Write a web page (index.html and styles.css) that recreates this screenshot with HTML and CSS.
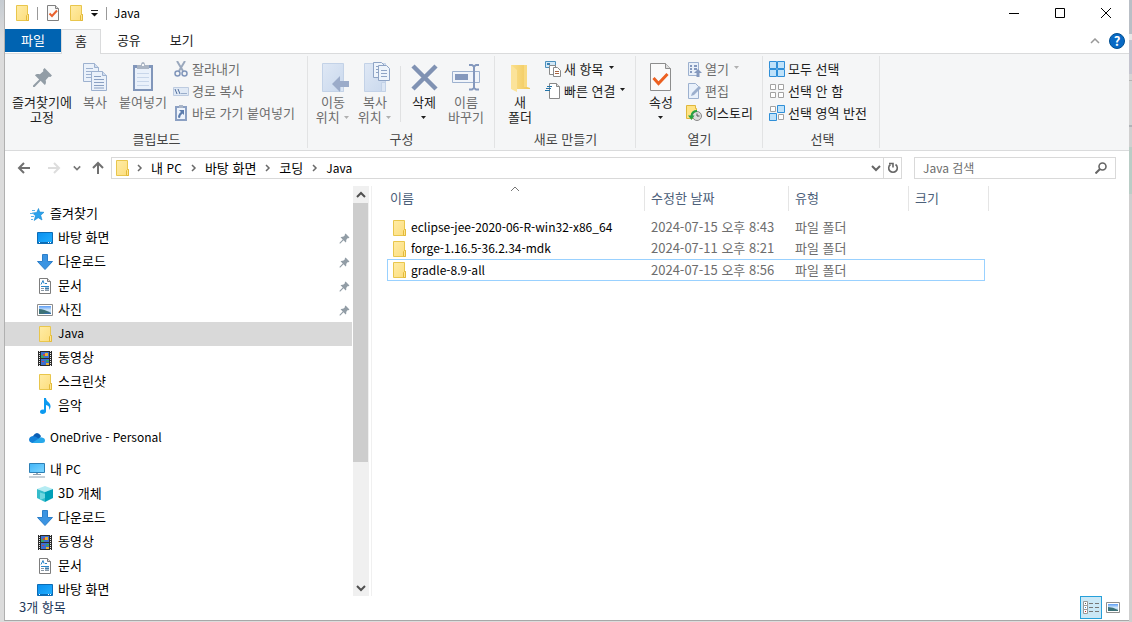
FILE: index.html
```html
<!DOCTYPE html>
<html lang="ko">
<head>
<meta charset="utf-8">
<title>Java</title>
<link rel="stylesheet" href="styles.css">
</head>
<body>
<svg class="defs" aria-hidden="true">
  <defs>
    <linearGradient id="gFolder" x1="0" y1="0" x2="1" y2="1"><stop offset="0" stop-color="#ffeca6"/><stop offset="1" stop-color="#fcdd7c"/></linearGradient>
    <linearGradient id="gBig" x1="0" y1="0" x2="1" y2="0"><stop offset="0" stop-color="#fbe08c"/><stop offset="1" stop-color="#f0c75a"/></linearGradient>
    <linearGradient id="gDesk" x1="0" y1="0" x2="1" y2="1"><stop offset="0" stop-color="#0a8fef"/><stop offset="1" stop-color="#22b0ff"/></linearGradient>
    <linearGradient id="gPc" x1="0" y1="0" x2="1" y2="1"><stop offset="0" stop-color="#3fb4f8"/><stop offset="1" stop-color="#7fd6ff"/></linearGradient>
    <linearGradient id="gPhoto" x1="0" y1="0" x2="0" y2="1"><stop offset="0" stop-color="#5c9df5"/><stop offset=".5" stop-color="#cfe6fa"/><stop offset="1" stop-color="#a9cdea"/></linearGradient>
    <linearGradient id="gMove" x1="0" y1="0" x2="1" y2="1"><stop offset="0" stop-color="#dfe8f5"/><stop offset="1" stop-color="#c9d8ed"/></linearGradient>
  </defs>
  <symbol id="folder" viewBox="0 0 16 16"><path d="M2.500.5h11v9h1v6h-12z" fill="url(#gFolder)" stroke="#e9c64c"/><path d="M12.500 15.500v-5l1-1h1v6z" fill="#ffe68f" stroke="#e3b93a"/></symbol>
  <symbol id="check" viewBox="0 0 16 16"><path d="M2.500.5h8l3 3v12h-11z" fill="#fafafa" stroke="#808080"/><path d="M10.500.5v3h3" fill="#ddd" stroke="#808080"/><path d="M4.500 8.500l2.500 2.500 5-5.500" fill="none" stroke="#e8602c" stroke-width="2"/></symbol>
  <symbol id="pin" viewBox="0 0 20 20"><path d="M12 1l7 7-1.500 1.500-1.500-.3-3 3.300c.7 2 .2 3.700-.8 4.700l-4-4L2.500 19H1v-1.500l5.800-5.700-4-4c1-1 2.700-1.500 4.700-.8l3.300-3-.3-1.500z" fill="#929da6"/></symbol>
  <symbol id="copy" viewBox="0 0 32 32"><g fill="#eaf1fa" stroke="#9db1cf"><path d="M4.500 1.500h11l4 4v14h-15z"/><path d="M15.500 1.500v4h4" fill="#cfdcee"/><path d="M7 6.500h7M7 9.500h10M7 12.500h10M7 15.500h10"/><path d="M12.500 9.500h11l4 4v15h-15z"/><path d="M23.500 9.500v4h4" fill="#cfdcee"/><path d="M15 14.500h7M15 17.500h10M15 20.500h10M15 23.500h10M15 26h10" stroke="#8aa0c2"/></g></symbol>
  <symbol id="paste" viewBox="0 0 32 32"><path d="M6 3h20v26H6z" fill="#8196ba"/><path d="M8 6h16v21H8z" fill="#eaf1fb"/><path d="M10 11.500h12M10 15.500h12M10 19.500h12M10 23.500h12" stroke="#c8d6ea"/><path d="M10 3h4c0-4 4-4 4 0h4v4H10z" fill="#aab4c3"/><path d="M15 2h2v2h-2z" fill="#f5f6f7"/></symbol>
  <symbol id="scissors" viewBox="0 0 16 16"><path d="M4 0l6 10M12 0L6 10" stroke="#9aa8bd" stroke-width="2" fill="none"/><circle cx="4.500" cy="12.500" r="2.500" fill="none" stroke="#8196ba" stroke-width="1.500"/><circle cx="11.500" cy="12.500" r="2.500" fill="none" stroke="#8196ba" stroke-width="1.500"/></symbol>
  <symbol id="path" viewBox="0 0 16 16"><path d="M.5 4.500h15v8H.5z" fill="#e0e9f5" stroke="#bdcbe0"/><path d="M2 6l2 5M5 6l2 5M8.500 10.500h1M10.500 10.500h1M12.500 10.500h1" stroke="#52709e" fill="none"/></symbol>
  <symbol id="shortcut" viewBox="0 0 16 16"><path d="M2 1h12v15H2z" fill="#8ba0c3"/><path d="M4 3h8v11H4z" fill="#eef4fc"/><path d="M6 0h4v3H6z" fill="#a9b5c8"/><path d="M6 5h5v5L9.500 8.500Q7 10 7 13L5 12.500Q5 9 8 7z" fill="#5d7dad"/></symbol>
  <symbol id="move" viewBox="0 0 32 32"><path d="M5.500 1.500h21v28h-21z" fill="url(#gMove)" stroke="#c3d2e7"/><path d="M23.500 20.500h3v9h-3z" fill="#dce6f4" stroke="#c3d2e7"/><path d="M15 22l8-8v5h9v6h-9v5z" fill="#9babc9"/></symbol>
  <symbol id="copyto" viewBox="0 0 32 32"><path d="M5.500 1.500h21v28h-21z" fill="url(#gMove)" stroke="#c3d2e7"/><path d="M22.500 20.500h4v9h-4z" fill="#dce6f4" stroke="#c3d2e7"/><g fill="#eef4fb" stroke="#8fa4c5"><path d="M14.500.5h8l3 3v12h-11z"/><path d="M17 4.500h5M17 7.500h5M17 10.500h5"/><path d="M19.500 3.500h8l3 3v12h-11z"/><path d="M22 8.500h6M22 11.500h6M22 14.500h6"/></g></symbol>
  <symbol id="delete" viewBox="0 0 32 32"><path d="M5 4l23 23M28 4L5 27" stroke="#8092b3" stroke-width="4.500"/></symbol>
  <symbol id="rename" viewBox="0 0 32 32"><path d="M2.500 9.500h27v11h-27z" fill="#f0f4fa" stroke="#9db1cf"/><path d="M5 12h13v6H5z" fill="#8498bd"/><path d="M19 3h3l2 1.500L26 3h3M19 27.500h3l2-1.500 2 1.500h3M24 4v23" fill="none" stroke="#8498bd" stroke-width="2"/></symbol>
  <symbol id="newfolder" viewBox="0 0 32 32"><path d="M7 3h16v22l3 1v1H11z" fill="url(#gBig)"/><path d="M7 3l6 5v22l-6-3z" fill="#fbe39a"/><path d="M20 3h3v22h-3z" fill="#f8da82"/></symbol>
  <symbol id="newitem" viewBox="0 0 16 16"><path d="M.5.500h10v6H.5z" fill="#d2e8f7" stroke="#4b90bd"/><path d="M2 2h3v2H2z" fill="#3a82b4"/><g fill="#fff" stroke="#8a8a8a"><path d="M4.500 4.500h6v9h-6z"/><path d="M8.500 6.500h4l3 3v6h-7z"/></g><path d="M10 10.500h4M10 12.500h4" stroke="#a9643f"/></symbol>
  <symbol id="easy" viewBox="0 0 16 16"><path d="M4.500.5h7l3 3v12h-10z" fill="#fff" stroke="#888"/><path d="M11.500.5v3h3" fill="#ddd" stroke="#888"/><path d="M2 3.500h5M1 5.500h5M0 7.500h5" stroke="#2474a8"/></symbol>
  <symbol id="props" viewBox="0 0 32 32"><path d="M5.500 1.500h15l5 5v22h-20z" fill="#fafafa" stroke="#8d8d8d"/><path d="M20.500 1.500v5h5" fill="#dedede" stroke="#8d8d8d"/><path d="M8.500 16l5 5.500L22.500 12" fill="none" stroke="#ec6021" stroke-width="3"/></symbol>
  <symbol id="open" viewBox="0 0 16 16"><path d="M2.500 1.500h10v13h-10z" fill="#e9f0f9" stroke="#9db1cf"/><path d="M4 4h2v2H4zM4 7h2v2H4zM4 10h2v2H4zM8 4h3v2H8zM8 7h3v2H8z" fill="#8498bd"/><path d="M8 12l4-4 4 4h-2.500v4h-3v-4z" fill="#8498bd"/></symbol>
  <symbol id="edit" viewBox="0 0 16 16"><path d="M2.500.5h7l3 3v12h-10z" fill="#e9f1fb" stroke="#9db1cf"/><path d="M5 13l1-3 7-7 2 2-7 7z" fill="#9cafcd"/></symbol>
  <symbol id="history" viewBox="0 0 16 16"><path d="M.5.500h9v3h1v10H.5z" fill="#ffe384" stroke="#dfb73c"/><circle cx="11" cy="11" r="4.500" fill="#ddd" stroke="#888"/><path d="M11 8.500v2.500h2.500" fill="none" stroke="#555"/><path d="M11 6Q6 6 5.500 11" fill="none" stroke="#27a243" stroke-width="2"/><path d="M2 10.500l3.500 4.500 3-4.500z" fill="#27a243"/></symbol>
  <symbol id="selall" viewBox="0 0 16 16"><path d="M.5.500h7v7h-7zM8.500.5h7v7h-7zM.5 8.500h7v7h-7zM8.500 8.500h7v7h-7z" fill="#bfe2fa" stroke="#2f8fd8"/></symbol>
  <symbol id="selnone" viewBox="0 0 16 16"><path d="M1.500 1.500h5v5h-5zM9.500 1.500h5v5h-5zM1.500 9.500h5v5h-5zM9.500 9.500h5v5h-5z" fill="#fff" stroke="#a2a2a2"/></symbol>
  <symbol id="selinv" viewBox="0 0 16 16"><path d="M1.500 1.500h5v5h-5zM9.500 9.500h5v5h-5z" fill="#fff" stroke="#a2a2a2"/><path d="M8.500.5h7v7h-7zM.5 8.500h7v7h-7z" fill="#bfe2fa" stroke="#2f8fd8"/></symbol>
  <symbol id="star" viewBox="0 0 16 16"><path d="M9.500 2.500l1.200 3.500 4.300.300-3.300 2.900 1.300 4.800-3.800-2.300-4 2.800 1.300-4.800L3.500 7l4.200-.5z" fill="#2ba2ec" stroke="#1686cf" stroke-width=".6"/><path d="M3 4.500h3M1 7.500h4M2 10.500h3M2 13.500h2" stroke="#5bb4ec"/></symbol>
  <symbol id="desktop" viewBox="0 0 16 16"><path d="M.5 2.500h15v11H.5z" fill="url(#gDesk)" stroke="#0c6cb5"/><path d="M1 12.500h14" stroke="#0c6cb5"/><path d="M2 12.500h1M11 12.500h1M13 12.500h1" stroke="#fff"/></symbol>
  <symbol id="down" viewBox="0 0 16 16"><path d="M5.500.5h5v7h5L8 15.500.5 7.500h5z" fill="#3b94e2" stroke="#2c7fca"/></symbol>
  <symbol id="doc" viewBox="0 0 16 16"><path d="M2.500.5h8l3 3v12h-11z" fill="#fff" stroke="#7d7d7d"/><path d="M10.500.5v3h3" fill="#ddd" stroke="#7d7d7d"/><path d="M4 6.500l2-4 1 3M8 5.500h2M4 8.500h8" stroke="#2a86c8" fill="none"/><path d="M4 10.500h3M4 12.500h3M8 12.500h4" stroke="#8a98a5"/><path d="M8 9.500h4v2H8z" fill="#437faa"/></symbol>
  <symbol id="photo" viewBox="0 0 16 16"><path d="M.5 2.500h15v11H.5z" fill="#fff" stroke="#8d8d8d"/><path d="M2 4h12v8H2z" fill="url(#gPhoto)"/><path d="M2 7q5 0 12 4v1H2z" fill="#3c7177"/><path d="M6 12q3-2 8-1v1z" fill="#376fa8"/></symbol>
  <symbol id="film" viewBox="0 0 16 16"><path d="M1 1h14v15H1z" fill="#2b2b2b"/><path d="M2.500 1v15M13.500 1v15" stroke="#eee" stroke-dasharray="1 1"/><path d="M4 2h8v6H4zM4 9h8v6H4z" fill="#3d6fd0"/><path d="M4 5h3v3H4zM9 10h3v2H9z" fill="#37a36b"/><path d="M8 3h3v3H8zM9 13h3v2H9z" fill="#e6b032"/><path d="M6 4h2v2H6zM5 11h2v1H5z" fill="#c5464b"/></symbol>
  <symbol id="music" viewBox="0 0 16 16"><path d="M7 0h2c0 4 5 4 4.500 9-.3 1.500-1 2.500-1.500 3 .8-3-.5-4.500-3-5v6.500c0 3-6 3.200-6 .5 0-2 2-2.800 4-2.300z" fill="#0c9af0"/></symbol>
  <symbol id="cloud" viewBox="0 0 16 16"><path d="M4 6q4-6 8 0l-2 4H3z" fill="#0a5eb5"/><path d="M3 13q-3-1-3-3 0-3.500 4-4 3 0 6 3l3 4z" fill="#1380d8"/><path d="M3 13l6-4q2-2.500 4-1.500 3 .5 3 3 0 2.500-3 2.500z" fill="#28a8ea"/></symbol>
  <symbol id="pc" viewBox="0 0 16 16"><path d="M.5 1.500h15v9H.5z" fill="url(#gPc)" stroke="#2d7fb5"/><path d="M7 11h2v2H7z" fill="#9aa8b3"/><path d="M4 12.500h8M0 15h16" stroke="#8fa1b0"/></symbol>
  <symbol id="cube" viewBox="0 0 16 16"><path d="M0 3l8-3 8 3-8 3z" fill="#b5ecf3"/><path d="M0 3l8 3v10l-8-4z" fill="#35bccb"/><path d="M16 3L8 6v10l8-4z" fill="#00a0b8"/><path d="M3 6.500l5 1.500v4l-5 2z" fill="#70d7e0"/></symbol>
  <symbol id="chev" viewBox="0 0 9 8"><path d="M3 1l3 3-3 3" fill="none" stroke="#6a6a6a" stroke-width="1.500"/></symbol>
  <symbol id="vee" viewBox="0 0 10 10"><path d="M1 3l4 4 4-4" fill="none" stroke="currentColor" stroke-width="2"/></symbol>
  <symbol id="caret" viewBox="0 0 7 4"><path d="M1 0h5L3.500 3z" fill="currentColor"/></symbol>
</svg>

<div class="window">
  <header class="titlebar">
    <svg class="i16"><use href="#folder"/></svg><span class="rule"></span>
    <button class="plain" aria-label="속성"><svg class="i16"><use href="#check"/></svg></button>
    <button class="plain" aria-label="새 폴더"><svg class="i16"><use href="#folder"/></svg></button>
    <button class="plain" aria-label="빠른 실행 도구 모음 사용자 지정"><svg class="custom" viewBox="0 0 8 8"><path d="M0 1.500h7" stroke="#222"/><path d="M0 4h7L3.500 7.500z" fill="#111"/></svg></button>
    <span class="rule"></span>
    <h1 class="en">Java</h1>
    <div class="caption">
      <button aria-label="최소화"><svg viewBox="0 0 10 10"><path d="M0 5.500h10" stroke="#000"/></svg></button>
      <button aria-label="최대화"><svg viewBox="0 0 10 10"><path d="M.5.500h9v9h-9z" fill="none" stroke="#000"/></svg></button>
      <button aria-label="닫기"><svg viewBox="0 0 10 10"><path d="M0 0l10 10M10 0L0 10" stroke="#000"/></svg></button>
    </div>
  </header>

  <nav class="tabs">
    <button class="tab file">파일</button><button class="tab active">홈</button><button class="tab">공유</button><button class="tab">보기</button>
    <button class="plain collapse" aria-label="리본 최소화"><svg viewBox="0 0 10 6"><path d="M1 5l4-4 4 4" fill="none" stroke="#999" stroke-width="1.500"/></svg></button>
    <button class="help" aria-label="도움말">?</button>
  </nav>

  <section class="ribbon">
    <div class="group clip">
      <div class="tools">
        <button class="big wide"><svg class="i32" viewBox="0 0 32 32"><use href="#pin" x="6" y="5" width="21" height="21"/></svg><span>즐겨찾기에<br>고정</span></button>
        <button class="big off"><svg class="i32"><use href="#copy"/></svg><span>복사</span></button>
        <button class="big off paste"><svg class="i32"><use href="#paste"/></svg><span>붙여넣기</span></button>
        <div class="list">
          <button class="small off"><svg class="i16"><use href="#scissors"/></svg>잘라내기</button>
          <button class="small off"><svg class="i16"><use href="#path"/></svg>경로 복사</button>
          <button class="small off"><svg class="i16"><use href="#shortcut"/></svg>바로 가기 붙여넣기</button>
        </div>
      </div>
      <div class="caption-text">클립보드</div>
    </div>
    <div class="group organize">
      <div class="tools">
        <button class="big off"><svg class="i32"><use href="#move"/></svg><span>이동<br>위치 <svg class="caret"><use href="#caret"/></svg></span></button>
        <button class="big off"><svg class="i32"><use href="#copyto"/></svg><span>복사<br>위치 <svg class="caret"><use href="#caret"/></svg></span></button>
        <span class="divider"></span>
        <button class="big"><svg class="i32"><use href="#delete"/></svg><span>삭제<br><svg class="caret"><use href="#caret"/></svg></span></button>
        <button class="big off"><svg class="i32"><use href="#rename"/></svg><span>이름<br>바꾸기</span></button>
      </div>
      <div class="caption-text">구성</div>
    </div>
    <div class="group new">
      <div class="tools">
        <button class="big"><svg class="i32"><use href="#newfolder"/></svg><span>새<br>폴더</span></button>
        <div class="list">
          <button class="small"><svg class="i16"><use href="#newitem"/></svg>새 항목 <svg class="caret"><use href="#caret"/></svg></button>
          <button class="small"><svg class="i16"><use href="#easy"/></svg>빠른 연결 <svg class="caret"><use href="#caret"/></svg></button>
        </div>
      </div>
      <div class="caption-text">새로 만들기</div>
    </div>
    <div class="group open">
      <div class="tools">
        <button class="big"><svg class="i32"><use href="#props"/></svg><span>속성<br><svg class="caret"><use href="#caret"/></svg></span></button>
        <div class="list">
          <button class="small off"><svg class="i16"><use href="#open"/></svg>열기 <svg class="caret"><use href="#caret"/></svg></button>
          <button class="small off"><svg class="i16"><use href="#edit"/></svg>편집</button>
          <button class="small"><svg class="i16"><use href="#history"/></svg>히스토리</button>
        </div>
      </div>
      <div class="caption-text">열기</div>
    </div>
    <div class="group select">
      <div class="tools">
        <div class="list">
          <button class="small"><svg class="i16"><use href="#selall"/></svg>모두 선택</button>
          <button class="small"><svg class="i16"><use href="#selnone"/></svg>선택 안 함</button>
          <button class="small"><svg class="i16"><use href="#selinv"/></svg>선택 영역 반전</button>
        </div>
      </div>
      <div class="caption-text">선택</div>
    </div>
  </section>

  <div class="navbar">
    <button class="plain arrow" aria-label="뒤로"><svg viewBox="0 0 14 14"><path d="M13 7H2M7 2L2 7l5 5" fill="none" stroke="#707070" stroke-width="2"/></svg></button>
    <button class="plain arrow" aria-label="앞으로"><svg viewBox="0 0 14 14"><path d="M1 7h11M7 2l5 5-5 5" fill="none" stroke="#ddd" stroke-width="2"/></svg></button>
    <button class="plain recent" aria-label="최근 위치"><svg class="i8"><use href="#vee"/></svg></button>
    <button class="plain arrow" aria-label="위로"><svg viewBox="0 0 14 14"><path d="M7 13V2M2 7l5-5 5 5" fill="none" stroke="#707070" stroke-width="2"/></svg></button>
    <div class="address">
      <svg class="i16"><use href="#folder"/></svg>
      <svg class="chev"><use href="#chev"/></svg><a href="#">내 <span class="en">PC</span></a>
      <svg class="chev"><use href="#chev"/></svg><a href="#">바탕 화면</a>
      <svg class="chev"><use href="#chev"/></svg><a href="#">코딩</a>
      <svg class="chev"><use href="#chev"/></svg><a href="#" class="en">Java</a>
      <button class="plain history" aria-label="이전 위치"><svg class="i10"><use href="#vee"/></svg></button>
      <button class="plain refresh" aria-label="새로 고침"><svg viewBox="0 0 12 12"><path d="M8.500 2.500a4.300 4.300 0 1 1-5 0" fill="none" stroke="#666" stroke-width="1.600"/><path d="M2 1.500h4v4" fill="none" stroke="#666" stroke-width="1.600"/></svg></button>
    </div>
    <label class="search"><input type="search" placeholder="Java 검색" aria-label="Java 검색"><svg viewBox="0 0 12 12"><circle cx="7.500" cy="4.500" r="3.500" fill="none" stroke="#666" stroke-width="1.600"/><path d="M5 7l-4.500 4.500" stroke="#666" stroke-width="2"/></svg></label>
  </div>

  <main class="content">
    <div class="side">
      <ul class="tree">
        <li class="root"><a href="#"><svg class="i16"><use href="#star"/></svg>즐겨찾기</a></li>
        <li><a href="#"><svg class="i16"><use href="#desktop"/></svg>바탕 화면<svg class="pin"><use href="#pin"/></svg></a></li>
        <li><a href="#"><svg class="i16"><use href="#down"/></svg>다운로드<svg class="pin"><use href="#pin"/></svg></a></li>
        <li><a href="#"><svg class="i16"><use href="#doc"/></svg>문서<svg class="pin"><use href="#pin"/></svg></a></li>
        <li><a href="#"><svg class="i16"><use href="#photo"/></svg>사진<svg class="pin"><use href="#pin"/></svg></a></li>
        <li class="current"><a href="#" class="en"><svg class="i16"><use href="#folder"/></svg>Java</a></li>
        <li><a href="#"><svg class="i16"><use href="#film"/></svg>동영상</a></li>
        <li><a href="#"><svg class="i16"><use href="#folder"/></svg>스크린샷</a></li>
        <li><a href="#"><svg class="i16"><use href="#music"/></svg>음악</a></li>
        <li class="root spaced"><a href="#" class="en"><svg class="i16"><use href="#cloud"/></svg>OneDrive - Personal</a></li>
        <li class="root spaced"><a href="#"><svg class="i16"><use href="#pc"/></svg><span>내 <span class="en">PC</span></span></a></li>
        <li><a href="#"><svg class="i16"><use href="#cube"/></svg>3D 개체</a></li>
        <li><a href="#"><svg class="i16"><use href="#down"/></svg>다운로드</a></li>
        <li><a href="#"><svg class="i16"><use href="#film"/></svg>동영상</a></li>
        <li><a href="#"><svg class="i16"><use href="#doc"/></svg>문서</a></li>
        <li><a href="#"><svg class="i16"><use href="#desktop"/></svg>바탕 화면</a></li>
      </ul>
      <div class="scroll">
        <button class="plain up" aria-label="위로 스크롤"><svg class="i10"><use href="#vee"/></svg></button>
        <div class="track"><div class="thumb"></div></div>
        <button class="plain" aria-label="아래로 스크롤"><svg class="i10"><use href="#vee"/></svg></button>
      </div>
    </div>
    <div class="files">
      <table>
        <colgroup><col class="c-name"><col class="c-date"><col class="c-type"><col class="c-size"><col class="c-end"></colgroup>
        <thead><tr><th>이름<svg class="sort" viewBox="0 0 10 6"><path d="M1 5l4-4 4 4" fill="none" stroke="#777"/></svg></th><th>수정한 날짜</th><th>유형</th><th colspan="2">크기</th></tr></thead>
        <tbody>
          <tr class="gap"><td colspan="5"></td></tr>
          <tr><td><a href="#" class="en"><svg class="i16"><use href="#folder"/></svg>eclipse-jee-2020-06-R-win32-x86_64</a></td><td>2024-07-15 오후 8:43</td><td>파일 폴더</td><td></td><td></td></tr>
          <tr><td><a href="#" class="en"><svg class="i16"><use href="#folder"/></svg>forge-1.16.5-36.2.34-mdk</a></td><td>2024-07-11 오후 8:21</td><td>파일 폴더</td><td></td><td></td></tr>
          <tr class="focus"><td><a href="#" class="en"><svg class="i16"><use href="#folder"/></svg>gradle-8.9-all</a></td><td>2024-07-15 오후 8:56</td><td>파일 폴더</td><td></td><td></td></tr>
        </tbody>
      </table>
    </div>
  </main>

  <footer class="status">
    <span class="count">3개 항목</span>
    <div class="views">
      <button class="view on" aria-label="자세히"><svg viewBox="0 0 16 14"><path d="M.5.500h4v4h-4zM.5 4.500h4v4h-4zM.5 8.500h4v4h-4z" fill="#fff" stroke="#999"/><path d="M2 2.500h1" stroke="#555"/><path d="M2 6.500h1" stroke="#38c"/><path d="M2 10.500h1" stroke="#c22"/><path d="M6 2.500h4M6 6.500h4M6 10.500h4M12 2.500h4M12 6.500h4M12 10.500h4" stroke="#777"/></svg></button>
      <button class="view" aria-label="큰 아이콘"><svg viewBox="0 0 14 12"><path d="M.5.500h13v10H.5z" fill="#fff" stroke="#8d8d8d"/><path d="M2 2h10v7H2z" fill="url(#gPhoto)"/><path d="M2 5q5 0 10 3v1H2z" fill="#3c7177"/></svg></button>
    </div>
  </footer>
</div>
</body>
</html>
```
FILE: styles.css
```css
* { box-sizing: border-box; }

body {
  margin: 0;
  height: 100vh;
  display: flex;
  padding: 0 3px 1px 4px;
  background:
    linear-gradient(#b9bfc6 0 34px, #e8e8e8 34px 40px, #c4c4cf 40px 74px, #d4d4d4 74px 80px, #b4b4b4 80px 81px, #d4d4d4 81px 125px, #b0b3b8 125px 127px, #d0d0d0 127px 147px, #bacdc6 147px 194px, #cfcfcf 194px) right / 3px 100% no-repeat,
    linear-gradient(#c6ccd2 0, #dcdcdc 40px, #dcdcdc 100%);
  font-family: "Noto Sans CJK KR", sans-serif;
  font-size: 13px;
  line-height: 15px;
  color: #000;
}

.en { font-size: 12px; }
.defs { position: absolute; width: 0; height: 0; }
svg { display: block; flex: none; }
.i8 { width: 8px; height: 8px; }
.i10 { width: 10px; height: 10px; }
.i16 { width: 16px; height: 16px; }
.i32 { width: 32px; height: 32px; }
.chev { width: 9px; height: 8px; }
.caret { display: inline-block; width: 7px; height: 4px; vertical-align: middle; }

button {
  font: inherit;
  color: inherit;
  background: none;
  border: 0;
  padding: 0;
  white-space: nowrap;
}
.plain { display: flex; align-items: center; justify-content: center; }
a { color: inherit; text-decoration: none; white-space: nowrap; }

.window {
  flex: 1;
  min-width: 0;
  display: flex;
  flex-direction: column;
  background: #fff;
  border-left: 1px solid #b0b0b0;
  border-bottom: 1px solid #a8a8a8;
}

/* Title bar */
.titlebar { display: flex; align-items: center; height: 28px; padding: 0 0 2px 9px; gap: 7px; }
.titlebar h1 { margin: 0; padding-bottom: 2px; font-weight: 400; }
.rule { width: 1px; height: 13px; background: #999; }
.custom { width: 8px; height: 8px; }
.caption { margin-left: auto; display: flex; }
.caption button { width: 46px; height: 26px; display: grid; place-items: center; }
.caption svg { width: 10px; height: 10px; }

/* Tabs */
.tabs { display: flex; align-items: stretch; height: 26px; padding-top: 1px; border-bottom: 1px solid #dadbdc; }
.tab { padding: 0 13px 4px 16px; color: #222; }
.tab.file { padding-right: 16px; background: #0063b1; color: #fff; margin-bottom: 1px; padding-bottom: 3px; }
.tab.active { padding: 0 13px 3px; border: 1px solid #dadbdc; border-bottom: 0; background: #f5f6f7; margin-bottom: -1px; }
.collapse { margin-left: auto; width: 16px; }
.collapse svg { width: 10px; height: 6px; }
.help {
  align-self: center;
  width: 16px;
  height: 16px;
  margin: 0 4px 0 6px;
  border: 1px solid #004f92;
  border-radius: 50%;
  background: #0869c4;
  color: #fff;
  font-weight: 700;
  line-height: 12px;
}

/* Ribbon */
.ribbon { display: flex; height: 97px; background: #f5f6f7; border-bottom: 1px solid #dadbdc; color: #1e1e1e; }
.group { display: flex; flex-direction: column; margin: 2px 0; padding: 2px 4px 0 5px; border-right: 1px solid #e2e3e4; }
.clip { width: 303px; }
.organize { width: 187px; }
.new { width: 141px; }
.open { width: 127px; }
.select { width: 117px; padding-left: 3px; padding-right: 0; }
.tools { display: flex; flex: 1; gap: 2px; }
.clip .tools { gap: 1px; }
.caption-text { text-align: center; line-height: 18px; color: #444; }
.big { width: 40px; display: flex; flex-direction: column; align-items: center; padding-top: 4px; }
.big.wide { width: 64px; }
.big.off { color: #6d6d6d; }
.big.paste { width: 54px; }
.divider { width: 1px; height: 56px; margin: 8px 1px 0 3px; background: #e0e1e2; }
.list { padding-left: 3px; }
.clip .list { padding-left: 2px; }
.small { display: flex; align-items: center; gap: 3px; height: 22px; padding-bottom: 2px; }
.small .i16 { margin-top: 2px; }
.small .caret { margin-left: 1px; }
.small.off { color: #6d6d6d; }
.off .caret { color: #b0b0b0; }

/* Address row */
.navbar { display: flex; align-items: center; height: 34px; padding: 0 13px 0 12px; }
.arrow { width: 14px; height: 22px; }
.arrow svg { width: 14px; height: 14px; }
.arrow + .arrow { margin-left: 16px; }
.recent { width: 8px; margin: 0 10px 0 12px; color: #777; }
.address {
  flex: 1;
  display: flex;
  align-items: center;
  gap: 7px;
  height: 22px;
  margin-left: 6px;
  padding-left: 2px;
  border: 1px solid #d9d9d9;
}
.address .i16 { margin-right: -2px; }
.address a { padding-bottom: 2px; }
.history { margin-left: auto; width: 10px; color: #666; }
.refresh { width: 18px; height: 20px; border-left: 1px solid #d9d9d9; margin-left: -5px; }
.refresh svg { width: 12px; height: 12px; }
.search { display: flex; align-items: center; width: 202px; height: 22px; margin-left: 12px; padding: 0 8px; border: 1px solid #d9d9d9; }
.search input { flex: 1; min-width: 0; border: 0; padding: 0 0 2px; font: inherit; font-size: 12px; outline: 0; background: none; }
.search input::placeholder { color: #6d6d6d; }
.search svg { width: 12px; height: 12px; }

/* Navigation pane */
.content { flex: 1; min-height: 0; display: flex; padding-top: 1px; }
.side { width: 367px; flex: none; display: flex; border-right: 1px solid #f0f0f0; }
.tree { flex: 1; margin: 0; padding: 16px 1px 0 0; list-style: none; overflow: hidden; }
.tree a { display: flex; align-items: center; gap: 5px; height: 24px; padding: 0 2px 4px 32px; }
.tree .i16, .pin { margin-top: 4px; }
.tree .root a { padding-left: 24px; }
.spaced { margin-top: 8px; }
.current { background: #d9d9d9; }
.pin { width: 11px; height: 11px; margin-left: auto; }
.scroll { width: 16px; margin-right: 2px; display: flex; flex-direction: column; background: #f0f0f0; color: #505050; }
.scroll button { height: 17px; }
.up svg { transform: rotate(180deg); }
.track { flex: 1; }
.thumb { width: 15px; height: 69%; background: #cdcdcd; }

/* File list */
.files { flex: 1; padding-left: 15px; min-width: 0; }
table { table-layout: fixed; width: 602px; border-collapse: separate; border-spacing: 0; color: #6d6d6d; }
.c-name { width: 258px; }
.c-date { width: 144px; }
.c-type { width: 120px; }
.c-size { width: 76px; }
.c-end { width: 4px; }
th { height: 25px; padding: 0 6px 2px; text-align: left; font-weight: 400; color: #4c607a; border-right: 1px solid #e5e5e5; position: relative; }
th:first-child { padding-left: 3px; }
.sort { position: absolute; top: 0; left: 50%; width: 10px; height: 6px; margin-left: -6px; }
.gap td { height: 6px; padding: 0; }
td { height: 21px; padding: 0 6px 2px; white-space: nowrap; }
td a { display: flex; align-items: center; gap: 4px; color: #000; }
td .i16 { margin-top: 2px; }
td:first-child { padding-left: 4px; }
td:last-child { padding: 0; }
.focus td { height: 22px; }
.focus td:not(:last-child) { border-top: 1px solid #99d1ff; border-bottom: 1px solid #99d1ff; }
.focus td:first-child { border-left: 1px solid #99d1ff; padding-left: 3px; }
.focus td:nth-child(4) { border-right: 1px solid #99d1ff; }

/* Status bar */
.status { display: flex; align-items: flex-start; height: 24px; padding: 0 5px 0 14px; color: #1e395b; }
.count { padding-top: 3px; }
.views { margin-left: auto; display: flex; align-items: center; }
.view { width: 22px; height: 23px; display: grid; place-items: center; }
.view.on { background: #cbe8f6; border: 1px solid #26a0da; }
.view svg { width: 14px; height: 12px; }
.view.on svg { width: 16px; height: 14px; }
```
